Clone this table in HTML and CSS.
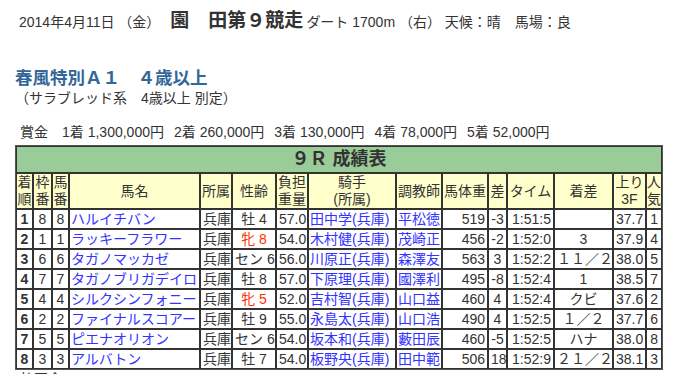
FILE: index.html
```html
<!DOCTYPE html>
<html lang="ja">
<head>
<meta charset="utf-8">
<title>9R 成績表</title>
<link rel="stylesheet" href="styles.css">
</head>
<body>
<div class="race-head">
  <span class="date">2014年4月11日 （金）</span><span class="place">園　田第９競走</span><span class="cond">ダート 1700m （右） 天候：晴　馬場：良</span>
</div>
<h2 class="race-name">春風特別Ａ１　４歳以上</h2>
<div class="race-sub">（サラブレッド系　4歳以上 別定）</div>
<div class="prize"><span class="prize-label">賞金　</span><span class="pz">1着 1,300,000円</span><span class="pz">2着 260,000円</span><span class="pz">3着 130,000円</span><span class="pz">4着 78,000円</span><span class="pz">5着 52,000円</span></div>
<table class="result">
  <colgroup>
    <col class="c-rank"><col class="c-waku"><col class="c-num"><col class="c-name"><col class="c-aff"><col class="c-sex"><col class="c-wt"><col class="c-jockey"><col class="c-trainer"><col class="c-body"><col class="c-diff"><col class="c-time"><col class="c-margin"><col class="c-3f"><col class="c-pop">
  </colgroup>
  <tr><th class="title" colspan="15">９Ｒ 成績表</th></tr>
  <tr class="head">
    <th>着<br>順</th><th>枠<br>番</th><th>馬<br>番</th><th>馬名</th><th>所属</th><th>性齢</th><th>負担<br>重量</th><th>騎手<br>(所属)</th><th>調教師</th><th>馬体重</th><th>差</th><th>タイム</th><th>着差</th><th>上り<br>3F</th><th>人<br>気</th>
  </tr>
  <tr><td class="rank">1</td><td class="c">8</td><td class="c">8</td><td class="l horse">ハルイチバン</td><td class="c">兵庫</td><td class="c">牡 4</td><td class="c">57.0</td><td class="l link">田中学(兵庫)</td><td class="l link">平松徳</td><td class="r">519</td><td class="c">-3</td><td class="r">1:51:5</td><td class="c"></td><td class="c">37.7</td><td class="c">1</td></tr>
  <tr><td class="rank">2</td><td class="c">1</td><td class="c">1</td><td class="l horse">ラッキーフラワー</td><td class="c">兵庫</td><td class="c mare">牝 8</td><td class="c">54.0</td><td class="l link">木村健(兵庫)</td><td class="l link">茂崎正</td><td class="r">456</td><td class="c">-2</td><td class="r">1:52:0</td><td class="c">3</td><td class="c">37.9</td><td class="c">4</td></tr>
  <tr><td class="rank">3</td><td class="c">6</td><td class="c">6</td><td class="l horse">タガノマッカゼ</td><td class="c">兵庫</td><td class="c">セン 6</td><td class="c">56.0</td><td class="l link">川原正(兵庫)</td><td class="l link">森澤友</td><td class="r">563</td><td class="c">3</td><td class="r">1:52:2</td><td class="c">１１／２</td><td class="c">38.0</td><td class="c">5</td></tr>
  <tr><td class="rank">4</td><td class="c">7</td><td class="c">7</td><td class="l horse">タガノブリガデイロ</td><td class="c">兵庫</td><td class="c">牡 8</td><td class="c">57.0</td><td class="l link">下原理(兵庫)</td><td class="l link">國澤利</td><td class="r">495</td><td class="c">-8</td><td class="r">1:52:4</td><td class="c">1</td><td class="c">38.5</td><td class="c">7</td></tr>
  <tr><td class="rank">5</td><td class="c">4</td><td class="c">4</td><td class="l horse">シルクシンフォニー</td><td class="c">兵庫</td><td class="c mare">牝 5</td><td class="c">52.0</td><td class="l link">吉村智(兵庫)</td><td class="l link">山口益</td><td class="r">460</td><td class="c">4</td><td class="r">1:52:4</td><td class="c">クビ</td><td class="c">37.6</td><td class="c">2</td></tr>
  <tr><td class="rank">6</td><td class="c">2</td><td class="c">2</td><td class="l horse">ファイナルスコアー</td><td class="c">兵庫</td><td class="c">牡 9</td><td class="c">55.0</td><td class="l link">永島太(兵庫)</td><td class="l link">山口浩</td><td class="r">490</td><td class="c">4</td><td class="r">1:52:5</td><td class="c">１／２</td><td class="c">37.7</td><td class="c">6</td></tr>
  <tr><td class="rank">7</td><td class="c">5</td><td class="c">5</td><td class="l horse">ピエナオリオン</td><td class="c">兵庫</td><td class="c">セン 6</td><td class="c">54.0</td><td class="l link">坂本和(兵庫)</td><td class="l link">藪田辰</td><td class="r">460</td><td class="c">-5</td><td class="r">1:52:5</td><td class="c">ハナ</td><td class="c">38.0</td><td class="c">8</td></tr>
  <tr><td class="rank">8</td><td class="c">3</td><td class="c">3</td><td class="l horse">アルバトン</td><td class="c">兵庫</td><td class="c">牡 7</td><td class="c">54.0</td><td class="l link">板野央(兵庫)</td><td class="l link">田中範</td><td class="r">506</td><td class="c">18</td><td class="r">1:52:9</td><td class="c">２１／２</td><td class="c">38.1</td><td class="c">3</td></tr>
</table>
<div class="after">払戻金</div>
</body>
</html>
```
FILE: styles.css
```css
body {
  margin: 8px;
  font-family: "Liberation Sans", "Noto Sans CJK JP", sans-serif;
  font-size: 14px;
  color: #333;
  background: #fff;
}

.race-head {
  padding-left: 11px;
  line-height: 26px;
  white-space: nowrap;
}
.race-head .place {
  font-size: 19px;
  font-weight: bold;
  margin-left: 10px;
}
.race-head .cond {
  margin-left: 3px;
}

.race-name {
  margin: 32px 0 0 7px;
  font-size: 17.5px;
  line-height: 22px;
  font-weight: bold;
  color: #336699;
}
.race-sub {
  margin-left: 7px;
  line-height: 18px;
}

.prize {
  margin: 16px 0 4px 12px;
  line-height: 18px;
  white-space: nowrap;
}
.prize .pz {
  margin-right: 10px;
}

.result {
  margin-left: 7px;
  width: 648px;
  table-layout: fixed;
  border-collapse: separate;
  border-spacing: 0;
  border: 1px solid #555;
}
.result th,
.result td {
  border: 1px solid #333;
  padding: 0 2px;
  white-space: nowrap;
  overflow: hidden;
}
.result th {
  font-weight: normal;
  background: #ffffcc;
  line-height: 17px;
  padding: 0;
}
.result th.title {
  background: #99cc99;
  font-size: 18px;
  font-weight: bold;
  line-height: 25px;
  text-align: center;
}
.result td {
  line-height: 18px;
}

.c-rank { width: 17px; }
.c-waku { width: 19px; }
.c-num { width: 17px; }
.c-name { width: 131px; }
.c-aff { width: 32px; }
.c-sex { width: 44px; }
.c-wt { width: 32px; }
.c-jockey { width: 88px; }
.c-trainer { width: 46px; }
.c-body { width: 46px; }
.c-diff { width: 19px; }
.c-time { width: 47px; }
.c-margin { width: 59px; }
.c-3f { width: 33px; }
.c-pop { width: 16px; }

.result td.rank { text-align: center; font-weight: bold; }
.result td.c { text-align: center; }
.result td.r { text-align: right; }
.result td.l { text-align: left; padding-left: 1px; }
.result td.horse,
.result td.link { color: #3333ff; }
.result td.mare { color: #ff3300; }

.after {
  padding-left: 12px;
  line-height: 18px;
}
```
